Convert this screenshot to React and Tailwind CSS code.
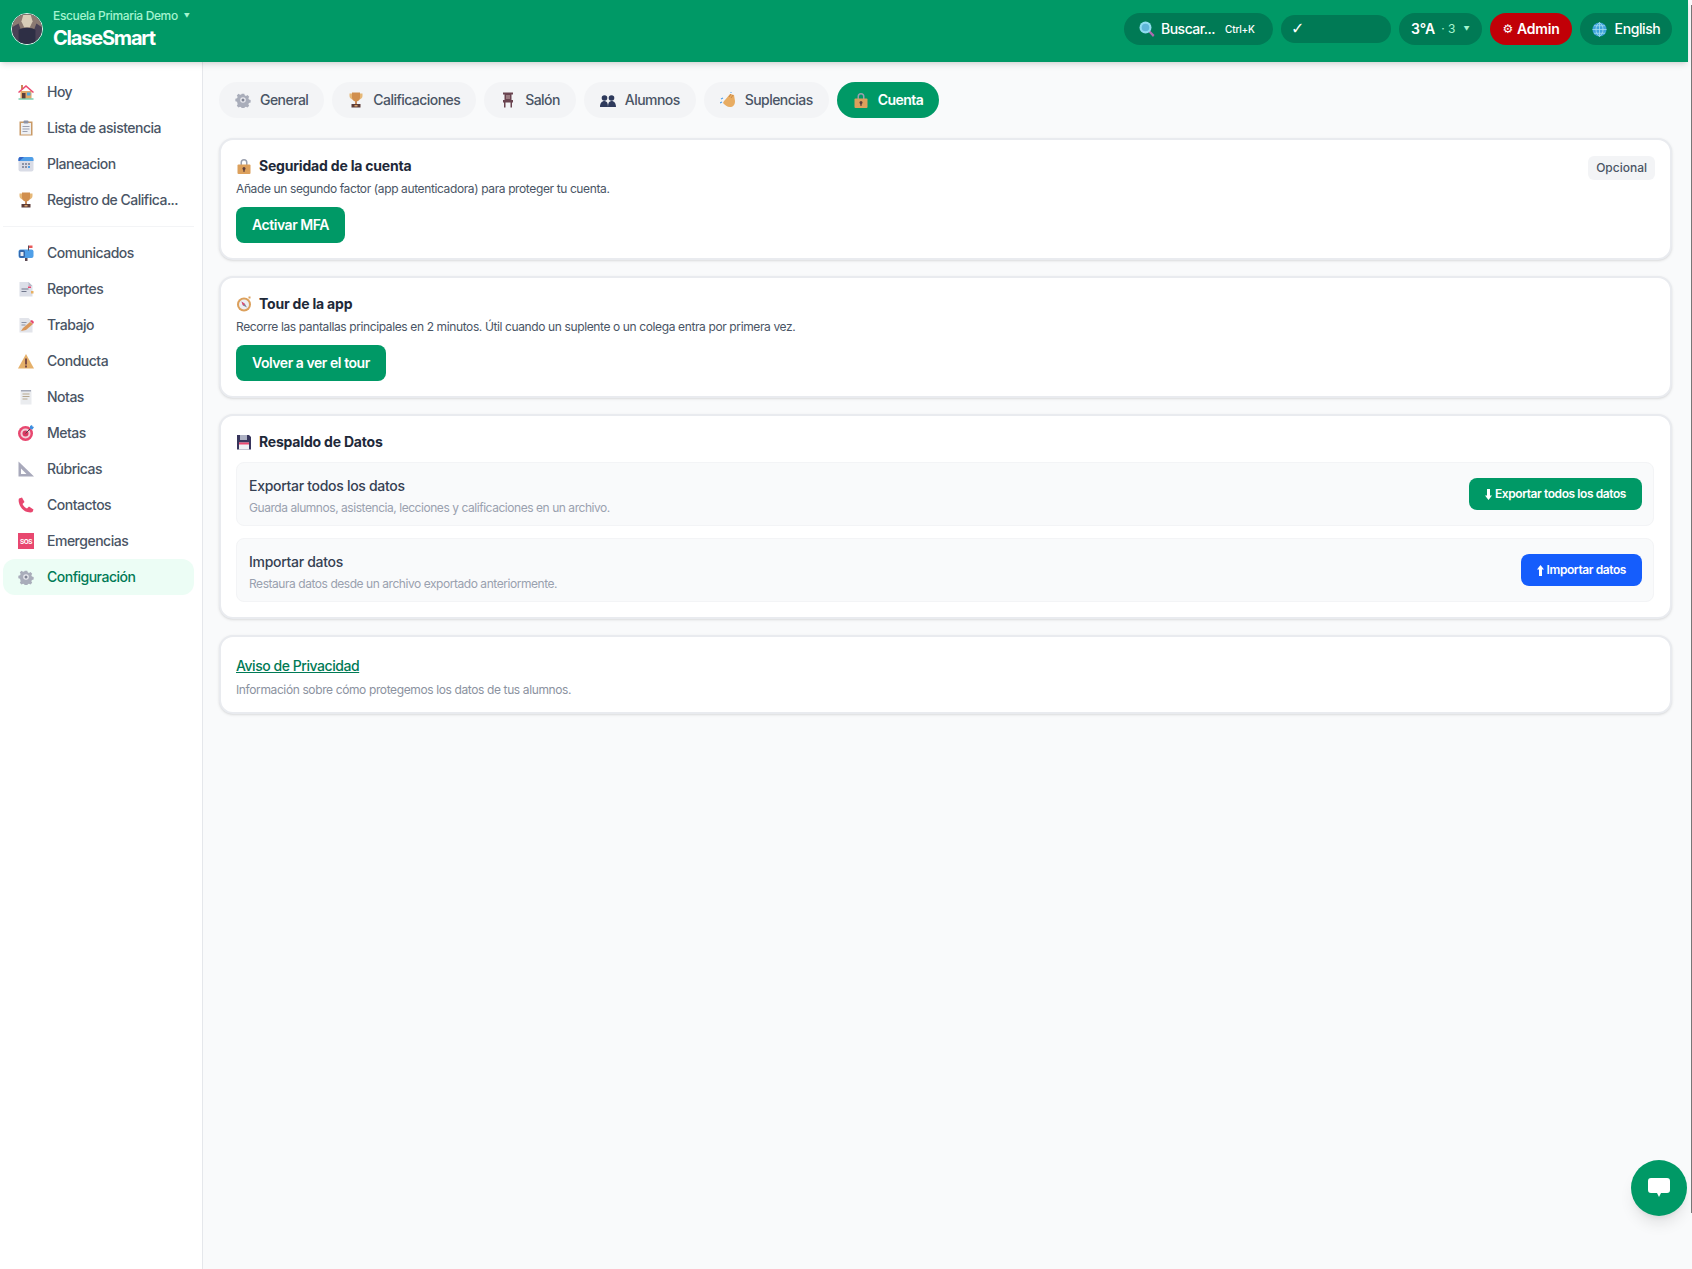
function Icon({ name, className = "w-4 h-4" }) {
  const art = {
    house: (
      <>
        <rect x="3" y="1" width="2" height="4" fill="#c98a5a" />
        <rect x="2.5" y="7" width="11" height="7.5" fill="#e0a868" />
        <path d="M0 8 8 1l8 7-1 1-7-6-7 6z" fill="#ec4a70" />
        <rect x="4" y="9" width="3.5" height="5.5" fill="#5c3d3a" />
        <rect x="9" y="8.5" width="3.5" height="3" fill="#4fa8e0" />
        <rect x="0.5" y="14.5" width="15" height="1" fill="#3fb58a" />
      </>
    ),
    clipboard: (
      <>
        <rect x="1.5" y="1.5" width="13" height="14" fill="#c99a66" />
        <rect x="3" y="3" width="10" height="11.5" fill="#eef0f4" />
        <rect x="5.5" y="0.5" width="5" height="3" rx="1" fill="#8d93a5" />
        <path d="M4.5 6h7v1h-7zM4.5 8.5h7v1h-7zM4.5 11h5v1h-5z" fill="#9aa0b0" />
      </>
    ),
    calendar: (
      <>
        <rect x="0.5" y="1" width="15" height="14.5" rx="2" fill="#d9dce6" />
        <path d="M.5 5V3a2 2 0 0 1 2-2h11a2 2 0 0 1 2 2v2z" fill="#4f9fe8" />
        <path d="M.5 3a2 2 0 0 1 2-2H6L1.500 5H.5z" fill="#3566c8" />
        <path d="M4 7h2v2H4zM7 7h2v2H7zM10 7h2v2h-2zM4 10h2v2H4zM7 10h2v2H7zM10 10h2v2h-2z" fill="#8d93a5" />
        <rect x="10" y="10" width="2" height="2" fill="#4f9fe8" />
      </>
    ),
    trophy: (
      <>
        <path d="M1.500 1.500h13v2.500c0 2-1.500 3-3 3.500h-7c-1.500-.5-3-1.500-3-3.500z" fill="#e6b878" />
        <path d="M4 .5h8v5C12 8 10 9.500 8 9.500S4 8 4 5.500z" fill="#d18f4e" />
        <rect x="7" y="9" width="2" height="3" fill="#c98a5a" />
        <rect x="3.500" y="12" width="9" height="3.500" fill="#5c3d3a" />
        <rect x="6.500" y="13" width="3" height="1.500" fill="#d9a066" />
      </>
    ),
    mailbox: (
      <>
        <rect x="0.500" y="4.500" width="15" height="8.500" rx="2" fill="#4f9fe8" />
        <rect x="1" y="5" width="6" height="8" rx="2" fill="#3566a8" />
        <rect x="2.500" y="7" width="3" height="4" fill="#e8eaf0" />
        <rect x="7" y="13" width="2.500" height="3" fill="#5c4a55" />
        <rect x="10" y="0.500" width="1" height="5" fill="#5c4a55" />
        <rect x="11" y="0.500" width="3.500" height="2.500" fill="#e85a5a" />
      </>
    ),
    report: (
      <>
        <path d="M1.500 1h9l4 4v10.500h-13z" fill="#dcdfe8" />
        <path d="M10.500 1l4 4h-4z" fill="#b8bcca" />
        <path d="M3.500 7.500h7v1h-7zM3.500 10h5v1h-5z" fill="#70778c" />
        <rect x="10" y="5.500" width="3" height="1.500" fill="#e8476f" />
        <rect x="13" y="10" width="2.500" height="2.500" fill="#e8b060" />
      </>
    ),
    memo: (
      <>
        <path d="M1.500 1h9l4 4v10.500h-13z" fill="#e2e4ea" />
        <path d="M3.500 5h5v1h-5zM3.500 7.500h4v1h-4z" fill="#8d93a5" />
        <path d="M3 14l2-3 7-6 3 2-7 6z" fill="#d9975a" />
        <path d="M12 4l3 3 1-2-2-2z" fill="#e8476f" />
      </>
    ),
    warning: (
      <>
        <path d="M8 1 16 15.500H0z" fill="#e5b06a" />
        <rect x="7" y="5.500" width="2" height="6" fill="#7a4a45" />
        <rect x="7" y="12.500" width="2" height="2" fill="#7a4a45" />
      </>
    ),
    notes: (
      <>
        <rect x="2.500" y="1" width="11" height="14.500" fill="#eaecef" />
        <path d="M3 1h10v1.500H3z" fill="#a6abb8" />
        <path d="M4.500 4.500h7v1h-7zM4.500 7h7v1h-7zM4.500 9.500h5v1h-5z" fill="#b5a78f" />
      </>
    ),
    target: (
      <>
        <circle cx="7.500" cy="8.500" r="7.500" fill="#e8476f" />
        <circle cx="7.500" cy="8.500" r="5" fill="#f3cfd8" />
        <circle cx="7.500" cy="8.500" r="3" fill="#d93a62" />
        <path d="M7.500 8.500 14 2" stroke="#46474f" strokeWidth="1" />
        <path d="M12 1l2-1 .5 1.500L16 2l-1.500 2.500L12 4z" fill="#3f8fe0" />
      </>
    ),
    ruler: (
      <>
        <path d="M.5 .5v15H16z" fill="#a8a9bb" />
        <path d="M3 7.500V13h5.500z" fill="#fff" />
      </>
    ),
    phone: (
      <path d="M1 1.500 4 .5l2.500 4.500L4.500 7c1 2 2.500 3.500 4.500 4.500l2-2 4.500 3-1 2.500c-1 .5-3 .5-5 0C5 14 2 10 1 6c-.5-2-.5-3.500 0-4.500z" fill="#e8476f" />
    ),
    gear: (
      <>
        <path d="M6.500.5h3l.5 2 1.500.7 1.800-1 2 2-1 1.800.7 1.500 2 .5v3l-2 .5-.7 1.500 1 1.800-2 2-1.800-1-1.500.7-.5 2h-3l-.5-2-1.500-.7-1.800 1-2-2 1-1.800L1 10l-2-.5v-3l2-.5.7-1.500-1-1.800 2-2 1.800 1L6 1.500z" fill="#a9adba" transform="translate(1.200 1.200) scale(.85)" />
        <circle cx="8" cy="8" r="2.800" fill="#e8e9ee" />
        <circle cx="8" cy="8" r="1.500" fill="#7f8494" />
      </>
    ),
    chair: (
      <>
        <path d="M3 .5h10v2h-1.500v5.500H13v2.500h-1v5h-1.500v-5h-5v5H4v-5H3V8h1.500V2.500H3z" fill="#6a4450" />
        <rect x="6" y="3" width="4" height="4" fill="#9a7a80" />
      </>
    ),
    people: (
      <>
        <circle cx="4.500" cy="6" r="2.800" fill="#2e3a5c" />
        <circle cx="11.500" cy="6" r="2.800" fill="#2e3a5c" />
        <path d="M0 15c0-4 2-6 4.500-6s3.500 2 3.500 6zM8 15c0-4 1-6 3.500-6S16 11 16 15z" fill="#2e3a5c" />
      </>
    ),
    wave: (
      <>
        <path d="M5 8 10 2l4 1 1 6c0 4-2 6-5 6-3 0-5-2-7-4l1-2z" fill="#e8ac62" />
        <path d="M9 5l2-3M11 6l2-3" stroke="#c98a4a" strokeWidth="1" />
        <path d="M1 7l2-1M2 10l-2 1" stroke="#4f9fe8" strokeWidth="1.200" />
        <path d="M10 1l1-1 1 1z" fill="#4f9fe8" />
      </>
    ),
    lock: (
      <>
        <path d="M4.500 7V4.500a3.500 3.500 0 0 1 7 0V7H10V4.500a2 2 0 0 0-4 0V7z" fill="#9a9fae" />
        <rect x="1.500" y="6.500" width="13" height="9.500" rx="1" fill="#dca05c" />
        <circle cx="8" cy="10.500" r="1.500" fill="#5c3d3a" />
        <rect x="7.300" y="11" width="1.400" height="2.800" fill="#5c3d3a" />
      </>
    ),
    compass: (
      <>
        <circle cx="8" cy="8.500" r="7" fill="#dca05c" />
        <circle cx="8" cy="8.500" r="5" fill="#eceef3" />
        <path d="M5.500 5.500 9 8l2 3.500L7 9.500z" fill="#7f8494" />
        <path d="M5.500 5.500 9 8 7 9.500z" fill="#e8476f" />
        <rect x="12.500" y="0.500" width="2" height="2" fill="#dca05c" />
      </>
    ),
    floppy: (
      <>
        <path d="M1 1h12l2 2v12.500H1z" fill="#37355c" />
        <rect x="4" y="1" width="7" height="5" fill="#aeb2c4" />
        <rect x="3" y="8.500" width="10" height="7" fill="#eef0f4" />
        <rect x="3" y="8.500" width="10" height="2" fill="#e8476f" />
      </>
    ),
    search: (
      <>
        <path d="M9 10.500l1.500-1.500 5 5-1.500 2z" fill="#b06ab0" />
        <circle cx="6.500" cy="6.500" r="6" fill="#8fdcf0" />
        <circle cx="6.500" cy="6.500" r="3.800" fill="#5fb6d8" />
      </>
    ),
    globe: (
      <>
        <circle cx="8" cy="8" r="7.500" fill="#3fa3dc" />
        <path d="M.5 8h15M8 .5v15M2 4h12M2 12h12M8 .5c-5 4-5 11 0 15M8 .5c5 4 5 11 0 15" stroke="#a8e0f0" strokeWidth=".8" fill="none" />
      </>
    ),
  };
  return (
    <svg viewBox="0 0 16 16" className={`shrink-0 ${className}`} aria-hidden="true">
      {art[name]}
    </svg>
  );
}

function SosIcon() {
  return (
    <svg viewBox="0 0 16 16" className="w-4 h-4 shrink-0" aria-hidden="true">
      <rect width="16" height="16" fill="#e8476f" />
      <text x="8" y="11" fontSize="6.500" fontWeight="700" fill="#fff" textAnchor="middle" fontFamily="Inter, sans-serif">SOS</text>
    </svg>
  );
}

// thin arrow used on the backup buttons
function Arrow({ up }) {
  return (
    <svg viewBox="0 0 7 11" className={`h-[11px] w-[7px] shrink-0 ${up ? "rotate-180" : ""}`} aria-hidden="true">
      <path d="M2 0h3v6.500h2L3.500 11 0 6.500h2z" fill="currentColor" />
    </svg>
  );
}

const topLinks = [
  ["house", "Hoy"],
  ["clipboard", "Lista de asistencia"],
  ["calendar", "Planeacion"],
  ["trophy", "Registro de Califica..."],
];

const moreLinks = [
  ["mailbox", "Comunicados"],
  ["report", "Reportes"],
  ["memo", "Trabajo"],
  ["warning", "Conducta"],
  ["notes", "Notas"],
  ["target", "Metas"],
  ["ruler", "Rúbricas"],
  ["phone", "Contactos"],
  ["sos", "Emergencias"],
  ["gear", "Configuración"],
];

const tabs = [
  ["gear", "General"],
  ["trophy", "Calificaciones"],
  ["chair", "Salón"],
  ["people", "Alumnos"],
  ["wave", "Suplencias"],
  ["lock", "Cuenta"],
];

function NavLink({ icon, label }) {
  const active = label === "Configuración";
  return (
    <a
      className={`flex h-9 items-center gap-[13px] rounded-xl pl-[15px] pr-2 text-sm font-medium tracking-[-0.5px] ${
        active ? "bg-[#ecfdf5] text-[#007a55]" : "text-[#4a5565]"
      }`}
    >
      {icon === "sos" ? <SosIcon /> : <Icon name={icon} />}
      <span className="whitespace-nowrap">{label}</span>
    </a>
  );
}

function Card({ children, className = "pb-[15px]" }) {
  return (
    <section className={`relative rounded-[14px] border-2 border-[#e9ebef] bg-white pl-[15px] pr-4 pt-4 shadow-sm ${className}`}>
      {children}
    </section>
  );
}

function CardTitle({ icon, children }) {
  return (
    <h2 className="flex h-5 items-center gap-[7px] text-sm font-bold tracking-[-0.2px] text-[#1e2939]">
      <Icon name={icon} />
      {children}
    </h2>
  );
}

function GreenButton({ children }) {
  return (
    <button className="mt-[10px] block h-9 rounded-lg bg-[#009966] px-4 text-sm font-semibold tracking-[-0.45px] text-white">
      {children}
    </button>
  );
}

function BackupRow({ title, text, action, up, color }) {
  return (
    <div className="flex h-16 items-center justify-between rounded-lg border border-[#f3f4f6] bg-[#f9fafb] pl-3 pr-[11px]">
      <div className="pt-1">
        <p className="text-sm leading-5 font-medium tracking-[-0.3px] text-[#364153]">{title}</p>
        <p className="mt-1 text-xs leading-4 tracking-[-0.45px] text-[#99a1af]">{text}</p>
      </div>
      <button className={`flex h-8 items-center gap-[3px] rounded-lg px-4 text-xs font-semibold tracking-[-0.42px] text-white ${color}`}>
        <Arrow up={up} />
        {action}
      </button>
    </div>
  );
}

export default function App() {
  return (
    <div className="relative flex h-[1269px] flex-col overflow-hidden bg-[#f9fafb] font-[Inter,sans-serif]">
      <header className="relative z-10 mr-1 flex h-[62px] shrink-0 items-center justify-between bg-[#009966] pb-1 pl-[11px] pr-4 shadow-md">
        <div className="flex items-center gap-[10px]">
          <svg viewBox="0 0 32 32" className="h-8 w-8 rounded-full border border-white/90" aria-hidden="true">
            <rect width="32" height="32" fill="#4a4256" />
            <path d="M0 0h32v14l-6-4-3 8H10L7 10l-7 4z" fill="#8b7a72" />
            <path d="M12 1h8l2 7-3 6h-6l-3-6z" fill="#d8cdb8" />
            <path d="M7 32V17c3-3 15-3 18 0v15z" fill="#2e2f45" />
          </svg>
          <div className="flex flex-col">
            <span className="flex items-center gap-[6px] text-xs leading-4 font-medium tracking-[-0.36px] text-[#a4f4cf]">
              Escuela Primaria Demo
              <span className="text-[6px] leading-none">▼</span>
            </span>
            <span className="mt-[2px] text-xl leading-6 font-bold tracking-[-1.2px] text-white">ClaseSmart</span>
          </div>
        </div>

        <div className="flex items-center gap-2">
          <div className="flex h-8 w-[149px] items-center rounded-full bg-[#007a55] pl-[15px] text-sm font-medium tracking-[-0.5px] text-white">
            <Icon name="search" />
            <span className="ml-[6px]">Buscar...</span>
            <span className="ml-[10px] text-[10px] font-medium tracking-[-0.2px]">Ctrl+K</span>
          </div>
          <div className="flex h-7 w-[110px] items-center rounded-full bg-[#007a55] pl-[10px] font-['DejaVu_Sans',sans-serif] text-base text-white">✓</div>
          <div className="flex h-8 w-[83px] items-center rounded-full bg-[#007a55] pl-3 text-sm font-semibold text-white">
            3°A
            <span className="ml-[6px] text-xs font-normal text-[#a4f4cf]">· 3</span>
            <span className="ml-2 text-[6px] text-[#a4f4cf]">▼</span>
          </div>
          <div className="flex h-8 w-[82px] items-center justify-center gap-1 rounded-full bg-[#c10007] text-sm font-semibold tracking-[-0.2px] text-white">
            <span className="font-['DejaVu_Sans',sans-serif] text-xs font-normal">⚙</span>
            Admin
          </div>
          <div className="flex h-8 w-[92px] items-center justify-center gap-2 rounded-full bg-[#007a55] text-sm font-medium tracking-[-0.4px] text-white">
            <Icon name="globe" className="w-[15px] h-[15px]" />
            English
          </div>
        </div>
      </header>

      <div className="flex min-h-0 flex-1">
        <aside className="w-[203px] shrink-0 border-r border-[#e5e7eb] bg-white pl-[3px] pr-2 pt-3">
          <nav>
            {topLinks.map(([icon, label]) => (
              <NavLink key={label} icon={icon} label={label} />
            ))}
            <div className="my-2 h-px bg-[#f3f4f6]" />
            {moreLinks.map(([icon, label]) => (
              <NavLink key={label} icon={icon} label={label} />
            ))}
          </nav>
        </aside>

        <main className="flex-1 pl-4 pr-5 pt-5">
          <div className="mb-5 flex gap-2">
            {tabs.map(([icon, label]) => (
              <button
                key={label}
                className={`flex h-9 items-center gap-[9px] rounded-full px-4 text-sm font-medium tracking-[-0.55px] ${
                  label === "Cuenta" ? "bg-[#009966] font-semibold text-white" : "bg-[#f3f4f6] text-[#4a5565]"
                }`}
              >
                <Icon name={icon} />
                {label}
              </button>
            ))}
          </div>

          <div className="flex flex-col gap-4">
            <Card>
              <span className="absolute right-[15px] top-[16px] rounded-md bg-[#f3f4f6] px-2 py-1 text-xs font-medium text-[#4a5565]">
                Opcional
              </span>
              <CardTitle icon="lock">Seguridad de la cuenta</CardTitle>
              <p className="mt-[5px] text-xs leading-4 tracking-[-0.38px] text-[#4a5565]">
                Añade un segundo factor (app autenticadora) para proteger tu cuenta.
              </p>
              <GreenButton>Activar MFA</GreenButton>
            </Card>

            <Card>
              <CardTitle icon="compass">Tour de la app</CardTitle>
              <p className="mt-[5px] text-xs leading-4 tracking-[-0.38px] text-[#4a5565]">
                Recorre las pantallas principales en 2 minutos. Útil cuando un suplente o un colega entra por primera vez.
              </p>
              <GreenButton>Volver a ver el tour</GreenButton>
            </Card>

            <Card>
              <CardTitle icon="floppy">Respaldo de Datos</CardTitle>
              <div className="mt-[10px] flex flex-col gap-3">
                <BackupRow
                  title="Exportar todos los datos"
                  text="Guarda alumnos, asistencia, lecciones y calificaciones en un archivo."
                  action="Exportar todos los datos"
                  color="bg-[#009966]"
                />
                <BackupRow
                  title="Importar datos"
                  text="Restaura datos desde un archivo exportado anteriormente."
                  action="Importar datos"
                  up
                  color="bg-[#155dfc]"
                />
              </div>
            </Card>

            <Card className="pb-[14px]">
              <a className="mt-[3px] block text-sm leading-5 font-medium tracking-[-0.45px] text-[#007a55] underline">Aviso de Privacidad</a>
              <p className="mt-[6px] text-xs leading-4 tracking-[-0.38px] text-[#8b92a0]">Información sobre cómo protegemos los datos de tus alumnos.</p>
            </Card>
          </div>
        </main>
      </div>

      <button className="absolute left-[1631px] top-[1160px] flex h-14 w-14 items-center justify-center rounded-full bg-[#009966] text-white shadow-lg">
        <svg viewBox="0 0 22 20" className="h-5 w-[22px]" aria-hidden="true">
          <path d="M3 0h16a3 3 0 0 1 3 3v9a3 3 0 0 1-3 3h-6l-2 4-2-4H3a3 3 0 0 1-3-3V3a3 3 0 0 1 3-3z" fill="currentColor" />
        </svg>
      </button>
      <div className="absolute right-0 top-[5px] h-[1208px] w-px bg-[#777]" />
    </div>
  );
}
